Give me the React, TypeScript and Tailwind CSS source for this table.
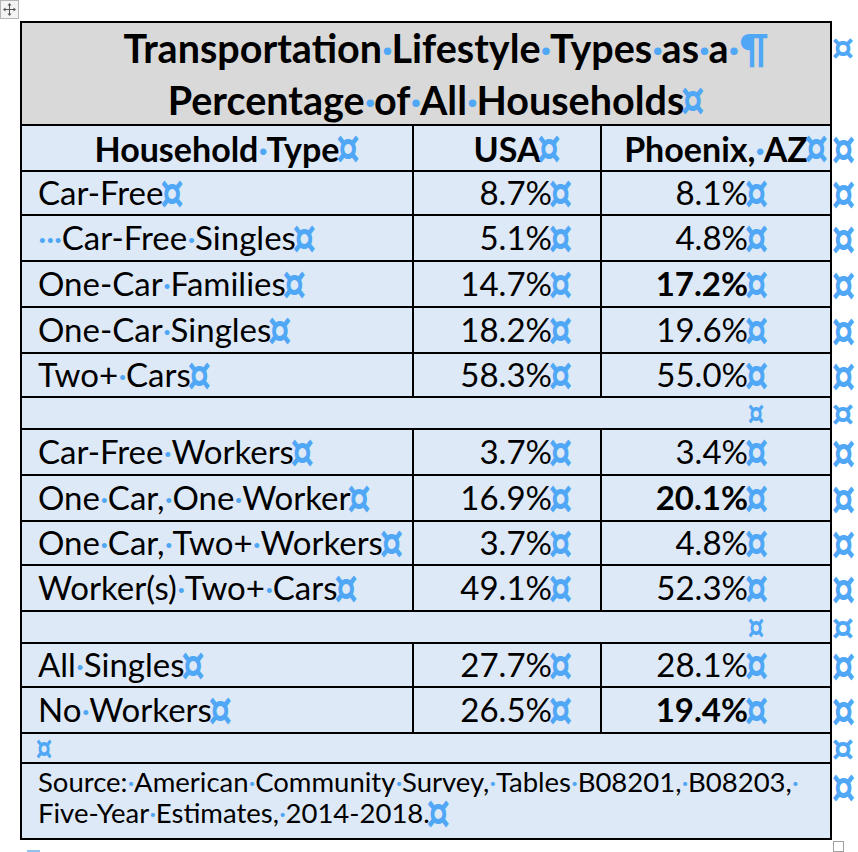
import { FC } from "react";

const MARK = "text-[#4fa7f5]";

type MarkSize = "normal" | "medium" | "small";

type Row = {
  label: string;
  usa?: string;
  phx?: string;
  bold?: boolean;
  h: string;
  blank?: "right" | "left";
};

const rows: Row[] = [
  { label: "Car-Free", usa: "8.7%", phx: "8.1%", h: "h-[44px]" },
  { label: "   Car-Free Singles", usa: "5.1%", phx: "4.8%", h: "h-[46px]" },
  { label: "One-Car Families", usa: "14.7%", phx: "17.2%", bold: true, h: "h-[46px]" },
  { label: "One-Car Singles", usa: "18.2%", phx: "19.6%", h: "h-[46px]" },
  { label: "Two+ Cars", usa: "58.3%", phx: "55.0%", h: "h-[44px]" },
  { label: "", blank: "right", h: "h-[32px]" },
  { label: "Car-Free Workers", usa: "3.7%", phx: "3.4%", h: "h-[46px]" },
  { label: "One Car, One Worker", usa: "16.9%", phx: "20.1%", bold: true, h: "h-[46px]" },
  { label: "One Car, Two+ Workers", usa: "3.7%", phx: "4.8%", h: "h-[44px]" },
  { label: "Worker(s) Two+ Cars", usa: "49.1%", phx: "52.3%", h: "h-[46px]" },
  { label: "", blank: "right", h: "h-[32px]" },
  { label: "All Singles", usa: "27.7%", phx: "28.1%", h: "h-[44px]" },
  { label: "No Workers", usa: "26.5%", phx: "19.4%", bold: true, h: "h-[46px]" },
  { label: "", blank: "left", h: "h-[30px]" },
];

const markSizes: Record<MarkSize, string> = {
  normal: "w-[17px] text-[37px] scale-y-[1.3]",
  medium: "w-[16px] text-[35px]",
  small: "w-[12px] text-[26px] scale-y-[1.3]",
};

// spaces shown as Word's blue middle dots
const Dots: FC<{ text: string }> = ({ text }) => (
  <>
    {text.split(/( )/).map((part, i) =>
      part === " " ? (
        <span key={i} className={`inline-block w-[0.24em] text-center ${MARK}`}>
          ·
        </span>
      ) : part ? (
        <span key={i}>{part}</span>
      ) : null
    )}
  </>
);

// Word end-of-cell marker
const CellMark: FC<{ size?: MarkSize }> = ({ size = "normal" }) => (
  <span
    className={`inline-flex h-[20px] justify-center font-['DejaVu_Sans',sans-serif] font-bold leading-[20px] ${MARK} ${markSizes[size]}`}
  >
    ¤
  </span>
);

const Marked: FC<{ text: string; bold?: boolean; after?: string }> = ({ text, bold, after }) => (
  <span className={`relative whitespace-nowrap ${bold ? "font-bold" : ""}`}>
    <Dots text={text} />
    <span className="absolute left-full top-0 flex h-full items-center">
      {after ? <span className={MARK}>{after}</span> : <CellMark />}
    </span>
  </span>
);

const RowMark: FC<{ size?: MarkSize; className?: string }> = ({ size, className = "items-center" }) => (
  <div className={`ml-[3px] flex w-[18px] ${className}`}>
    <CellMark size={size} />
  </div>
);

const MoveHandle: FC = () => (
  <div className="absolute left-0 top-0 flex h-[19px] w-[19px] items-center justify-center border border-[#b5b5b5] bg-[#f4f4f4]">
    <svg width="13" height="13" viewBox="0 0 13 13" fill="#555">
      <rect x="6" y="2" width="1" height="9" />
      <rect x="2" y="6" width="9" height="1" />
      <path d="M6.5 0 L4.5 2.5 H8.5 Z" />
      <path d="M6.5 13 L4.5 10.5 H8.5 Z" />
      <path d="M0 6.5 L2.5 4.5 V8.5 Z" />
      <path d="M13 6.5 L10.5 4.5 V8.5 Z" />
    </svg>
  </div>
);

const App: FC = () => {
  return (
    <div className="relative min-h-[852px] overflow-hidden bg-white font-['Lato',sans-serif] text-black">
      <MoveHandle />
      <div className="pl-[20px] pt-[21px]">
        {/* title */}
        <div className="flex">
          <div className="flex h-[105px] w-[812px] flex-col items-center justify-center border-2 border-black bg-[#d9d9d9] text-[39.5px] font-bold leading-[52px]">
            <Marked text="Transportation Lifestyle Types as a" after="·¶" />
            <Marked text="Percentage of All Households" />
          </div>
          <RowMark size="medium" className="items-start pt-[17px]" />
        </div>

        {/* header */}
        <div className="flex">
          <div className="flex h-[46px] w-[812px] border-x-2 border-b-2 border-black bg-[#dde9f6] text-[34px] font-bold">
            <div className="flex w-[392px] items-center justify-center border-r-2 border-black">
              <Marked text="Household Type" />
            </div>
            <div className="flex w-[188px] items-center justify-center border-r-2 border-black">
              <Marked text="USA" />
            </div>
            <div className="flex flex-1 items-center justify-center">
              <Marked text="Phoenix, AZ" />
            </div>
          </div>
          <RowMark />
        </div>

        {rows.map((r, i) => (
          <div key={i} className="flex">
            <div
              className={`flex ${r.h} w-[812px] border-x-2 border-b-2 border-black bg-[#dde9f6] text-[33px]`}
            >
              {r.blank ? (
                <div
                  className={`flex flex-1 items-center ${
                    r.blank === "right" ? "justify-end pr-[68px]" : "justify-start pl-[16px]"
                  }`}
                >
                  <CellMark size="small" />
                </div>
              ) : (
                <>
                  <div className="flex w-[392px] items-center border-r-2 border-black pl-[16px]">
                    <Marked text={r.label} />
                  </div>
                  <div className="flex w-[188px] items-center justify-end border-r-2 border-black pr-[48px]">
                    <Marked text={r.usa ?? ""} />
                  </div>
                  <div className="flex flex-1 items-center justify-end pr-[82px]">
                    <Marked text={r.phx ?? ""} bold={r.bold} />
                  </div>
                </>
              )}
            </div>
            <RowMark size={r.blank ? "medium" : "normal"} />
          </div>
        ))}

        {/* source */}
        <div className="flex">
          <div className="flex h-[76px] w-[812px] flex-col border-x-2 border-b-2 border-black bg-[#dde9f6] pl-[16px] pt-[2px] text-[27.5px] leading-[31px]">
            <span className="whitespace-nowrap">
              <Dots text="Source: American Community Survey, Tables B08201, B08203, " />
            </span>
            <span>
              <Marked text="Five-Year Estimates, 2014-2018." />
            </span>
          </div>
          <RowMark className="items-start pt-[13px]" />
        </div>

        <div className="relative">
          <div className="absolute left-[813px] top-[1px] h-[11px] w-[11px] border border-[#a0a0a0] bg-white" />
          <div className="absolute left-[7px] top-[10px] h-[3px] w-[13px] bg-[#8fc2ef]" />
        </div>
      </div>
    </div>
  );
};

export default App;
